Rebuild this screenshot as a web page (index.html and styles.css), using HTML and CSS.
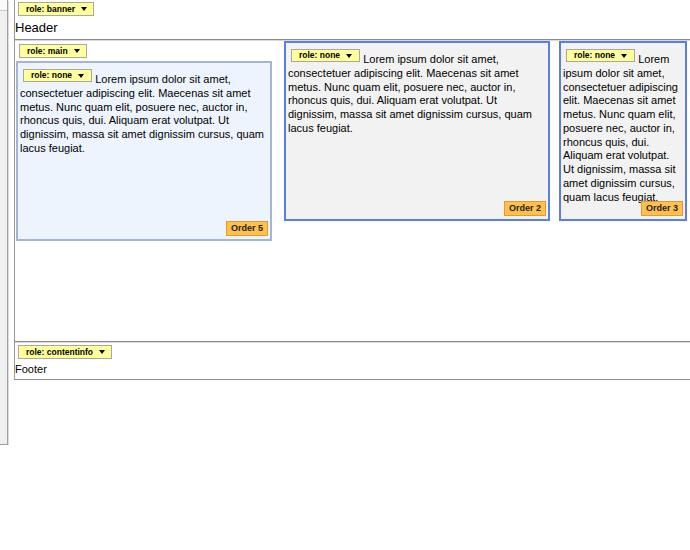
FILE: index.html
```html
<!DOCTYPE html>
<html lang="en">
<head>
  <meta charset="UTF-8">
  <title>Landmark Roles</title>
  <link rel="stylesheet" href="styles.css">
</head>
<body>
  <div class="sidebar">
    <div class="sidebar-top"></div>
  </div>

  <div class="page">
    <header class="region banner">
      <span class="role-tag">role: banner <span class="caret"></span></span>
      <div class="header-text">Header</div>
    </header>

    <main class="region main">
      <div class="main-col">
        <span class="role-tag">role: main <span class="caret"></span></span>
        <div class="card card-first">
          <span class="role-tag small">role: none <span class="caret"></span></span>
          Lorem ipsum dolor sit amet, consectetuer adipiscing elit. Maecenas sit amet metus. Nunc quam elit, posuere nec, auctor in, rhoncus quis, dui. Aliquam erat volutpat. Ut dignissim, massa sit amet dignissim cursus, quam lacus feugiat.
          <span class="order-tag">Order 5</span>
        </div>
      </div>

      <div class="card card-wide">
        <span class="role-tag small">role: none <span class="caret"></span></span>
        Lorem ipsum dolor sit amet, consectetuer adipiscing elit. Maecenas sit amet metus. Nunc quam elit, posuere nec, auctor in, rhoncus quis, dui. Aliquam erat volutpat. Ut dignissim, massa sit amet dignissim cursus, quam lacus feugiat.
        <span class="order-tag">Order 2</span>
      </div>

      <div class="card card-narrow">
        <span class="role-tag small">role: none <span class="caret"></span></span>
        Lorem ipsum dolor sit amet, consectetuer adipiscing elit. Maecenas sit amet metus. Nunc quam elit, posuere nec, auctor in, rhoncus quis, dui. Aliquam erat volutpat. Ut dignissim, massa sit amet dignissim cursus, quam lacus feugiat.
        <span class="order-tag">Order 3</span>
      </div>
    </main>

    <footer class="region footer">
      <span class="role-tag">role: contentinfo <span class="caret"></span></span>
      <div class="footer-text">Footer</div>
    </footer>
  </div>
</body>
</html>
```

FILE: styles.css
```css
body {
  margin: 0;
  font-family: "Liberation Sans", Arial, sans-serif;
  color: #000;
  background: #fff;
  display: flex;
  align-items: flex-start;
}
.sidebar {
  width: 7px;
  height: 444px;
  background-color: #f0f0f0;
  border-right: 1px solid #a0a0a0;
  border-bottom: 1px solid #a0a0a0;
  box-shadow: 1px 1px 0 #dcdcdc;
  margin-right: 6px;
  flex-shrink: 0;
}
.sidebar-top {
  height: 10px;
  background-color: #f9f9f9;
  border-bottom: 1px solid #c8c8c8;
}
.page {
  flex: 1;
  border-left: 1px solid #9a9a9a;
  overflow: hidden;
}
.region {
  box-sizing: border-box;
  border-bottom: 1px solid #8c8c8c;
  box-shadow: 0 1px 0 #d8d8d8;
}
.banner {
  height: 40px;
  padding-top: 2px;
}
.main {
  height: 301px;
  margin-top: 1px;
  display: flex;
  align-items: flex-start;
}
.footer {
  height: 37px;
  margin-top: 1px;
  padding-top: 2px;
}
.role-tag {
  display: flex;
  align-items: center;
  width: max-content;
  height: 12px;
  margin-left: 3px;
  padding: 0 6px 0 7px;
  background-color: #ffff9c;
  border: 1px solid #a8a8a0;
  font-size: 8.5px;
  font-weight: bold;
  line-height: 12px;
  white-space: nowrap;
}
.main-col > .role-tag {
  margin-top: 3px;
}
.caret {
  display: inline-block;
  width: 0;
  height: 0;
  margin-left: 6px;
  border-top: 4px solid #000;
  border-left: 3.5px solid transparent;
  border-right: 3.5px solid transparent;
}
.role-tag.small {
  display: inline-flex;
  height: 11px;
  line-height: 11px;
  margin: 4px 0 0 3px;
  padding-right: 7px;
  vertical-align: 5px;
}
.header-text {
  margin-top: 4px;
  font-size: 13px;
  line-height: 16px;
}
.footer-text {
  margin-top: 3px;
  font-size: 11px;
  line-height: 14px;
}
.main-col {
  margin-left: 1px;
}
.card {
  position: relative;
  box-sizing: border-box;
  height: 180px;
  padding: 2px 2px 0;
  font-size: 11px;
  line-height: 1.25;
  background-color: #f2f2f2;
  border: 2px solid #5b7fe0;
  flex-shrink: 0;
}
.card-first {
  width: 256px;
  margin-top: 3px;
  background-color: #edf4fe;
  border-color: #a3b7d3;
}
.card-wide {
  width: 266px;
  margin-left: 12px;
}
.card-narrow {
  width: 128px;
  margin-left: 9px;
}
.order-tag {
  position: absolute;
  right: 2px;
  bottom: 3px;
  padding: 0 4px;
  background-color: #ffc04c;
  border: 1px solid #e39a2c;
  font-size: 9px;
  font-weight: bold;
  line-height: 13px;
  color: #222;
}
```
